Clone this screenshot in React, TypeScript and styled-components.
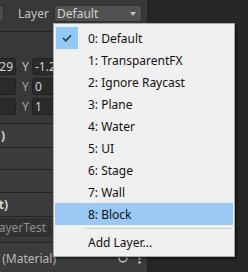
import React from "react";
import styled, { createGlobalStyle } from "styled-components";

const Global = createGlobalStyle`
  *, *::before, *::after { box-sizing: border-box; }
  html, body { margin: 0; padding: 0; background: #262626; }
  body { font-family: "Noto Sans", "Liberation Sans", sans-serif; }
`;

const Screen = styled.div`
  position: relative;
  width: 248px;
  height: 272px;
  overflow: hidden;
  display: flex;
  background: #262626;
`;

const Inspector = styled.div`
  width: 147px;
  flex: none;
  background: #383838;
  display: flex;
  flex-direction: column;
  color: #c4c4c4;
  font-size: 12px;
`;

const TopRow = styled.div`
  height: 32px;
  flex: none;
  border-bottom: 1px solid #242424;
  display: flex;
  align-items: flex-start;
  padding-top: 5px;
`;

const TagStub = styled.div`
  width: 4px;
  height: 17px;
  background: #4b4b4b;
  border: 1px solid #2e2e2e;
  border-left: none;
  border-radius: 0 3px 3px 0;
`;

const FieldLabel = styled.div`
  width: 36px;
  margin-left: 14px;
  height: 17px;
  line-height: 17px;
  color: #c4c4c4;
`;

const Dropdown = styled.div`
  width: 88px;
  height: 17px;
  background: #515151;
  border: 1px solid #2f2f2f;
  border-radius: 3px;
  display: flex;
  align-items: center;
  justify-content: space-between;
  padding: 0 5px 0 2px;
  color: #d2d2d2;
  line-height: 15px;
`;

const Arrow = styled.span`
  width: 0;
  height: 0;
  border-left: 3.5px solid transparent;
  border-right: 3.5px solid transparent;
  border-top: 4px solid #c4c4c4;
`;

const TransformBody = styled.div`
  height: 91px;
  flex: none;
  padding-top: 26px;
  display: flex;
  flex-direction: column;
  gap: 3px;
`;

const VecRow = styled.div`
  height: 17px;
  display: flex;
  align-items: center;
`;

const NumField = styled.div<{ $stub?: boolean }>`
  height: 17px;
  background: #2a2a2a;
  border: 1px solid #212121;
  border-radius: ${(p) => (p.$stub ? "0 3px 3px 0" : "3px")};
  ${(p) => (p.$stub ? "border-left: none; width: 16px; justify-content: flex-end; padding-right: 2px;" : "flex: 1; margin-right: 4px; padding-left: 2px;")}
  display: flex;
  align-items: center;
  overflow: hidden;
  white-space: nowrap;
  color: #d2d2d2;
  line-height: 15px;
`;

const AxisLabel = styled.div<{ $dim?: boolean }>`
  width: 16px;
  padding-left: 3px;
  text-align: center;
  color: ${(p) => (p.$dim ? "#a8a8a8" : "#c4c4c4")};
`;

const Header = styled.div<{ $h: number; $bold?: boolean }>`
  height: ${(p) => p.$h}px;
  flex: none;
  border-top: 1px solid #242424;
  background: #3c3c3c;
  display: flex;
  align-items: center;
  font-weight: ${(p) => (p.$bold ? 700 : 400)};
  color: ${(p) => (p.$bold ? "#d6d6d6" : "#b8b8b8")};
`;

const Clip = styled.div<{ $w: number }>`
  width: ${(p) => p.$w}px;
  flex: none;
  overflow: hidden;
  white-space: nowrap;
  display: flex;
  justify-content: flex-end;
  & > span { flex: none; }
`;

const FieldRowBox = styled.div`
  height: 26px;
  flex: none;
  border-top: 1px solid #242424;
  padding-top: 2px;
  display: flex;
  align-items: flex-start;
`;

const ReadOnlyField = styled.div`
  width: 51px;
  height: 17px;
  background: #323232;
  border: 1px solid #2a2a2a;
  border-left: none;
  border-radius: 0 3px 3px 0;
  overflow: hidden;
  white-space: nowrap;
  display: flex;
  justify-content: flex-end;
  align-items: center;
  padding-right: 4px;
  color: #8e8e8e;
  line-height: 15px;
  & > span { flex: none; }
`;

const HeaderIcons = styled.div`
  margin-left: auto;
  display: flex;
  align-items: center;
  gap: 10px;
  padding-right: 6px;
`;

const Menu = styled.div`
  position: absolute;
  left: 53px;
  top: 23px;
  width: 182px;
  height: 234px;
  background: #f0f0f0;
  border: 1px solid #a9a9a9;
  box-shadow: 2px 2px 2px rgba(0, 0, 0, 0.5);
  padding: 3px 1px;
  display: flex;
  flex-direction: column;
  color: #111;
  font-size: 12px;
`;

const MenuRow = styled.div<{ $hover?: boolean }>`
  height: 22px;
  flex: none;
  display: flex;
  align-items: center;
  padding-left: 1px;
  background: ${(p) => (p.$hover ? "#99c9f4" : "transparent")};
`;

const CheckSlot = styled.div<{ $on?: boolean }>`
  width: 22px;
  height: 22px;
  flex: none;
  display: flex;
  align-items: center;
  justify-content: center;
  background: ${(p) => (p.$on ? "#93c8f6" : "transparent")};
`;

const MenuText = styled.span`
  margin-left: 10px;
  white-space: nowrap;
`;

const Separator = styled.div`
  height: 6px;
  flex: none;
  padding: 3px 1px 0 29px;
  & > div { height: 1px; background: #d2d2d2; }
`;

const layers = [
  "0: Default",
  "1: TransparentFX",
  "2: Ignore Raycast",
  "3: Plane",
  "4: Water",
  "5: UI",
  "6: Stage",
  "7: Wall",
  "8: Block",
];

export default function App() {
  return (
    <>
      <Global />
      <Screen>
        <Inspector>
          <TopRow>
            <TagStub />
            <FieldLabel>Layer</FieldLabel>
            <Dropdown>
              <span>Default</span>
              <Arrow />
            </Dropdown>
          </TopRow>
          <TransformBody>
            <VecRow>
              <NumField $stub>0.29</NumField>
              <AxisLabel>Y</AxisLabel>
              <NumField>-1.2</NumField>
            </VecRow>
            <VecRow>
              <NumField $stub />
              <AxisLabel $dim>Y</AxisLabel>
              <NumField>0</NumField>
            </VecRow>
            <VecRow>
              <NumField $stub />
              <AxisLabel $dim>Y</AxisLabel>
              <NumField>1</NumField>
            </VecRow>
          </TransformBody>
          <Header $h={24} $bold>
            <Clip $w={5}>
              <span>)</span>
            </Clip>
          </Header>
          <Header $h={22} />
          <Header $h={23} />
          <Header $h={24} $bold>
            <Clip $w={8}>
              <span>t)</span>
            </Clip>
          </Header>
          <FieldRowBox>
            <ReadOnlyField>
              <span>LayerTest</span>
            </ReadOnlyField>
          </FieldRowBox>
          <Header $h={31}>
            <Clip $w={56}>
              <span>(Material)</span>
            </Clip>
            <HeaderIcons>
              <svg width="10" height="10" viewBox="0 0 10 10">
                <circle cx="5" cy="5" r="4" fill="none" stroke="#c4c4c4" strokeWidth="1.5" />
              </svg>
              <svg width="3" height="11" viewBox="0 0 3 11">
                <circle cx="1.5" cy="1.5" r="1.2" fill="#c4c4c4" />
                <circle cx="1.5" cy="5.5" r="1.2" fill="#c4c4c4" />
                <circle cx="1.5" cy="9.5" r="1.2" fill="#c4c4c4" />
              </svg>
            </HeaderIcons>
          </Header>
        </Inspector>
        <Menu>
          {layers.map((name, i) => (
            <MenuRow key={name} $hover={i === 8}>
              <CheckSlot $on={i === 0}>
                {i === 0 && (
                  <svg width="10" height="8" viewBox="0 0 10 8">
                    <path d="M1 4 L3.8 6.8 L9 1.2" fill="none" stroke="#2e3a44" strokeWidth="1.6" />
                  </svg>
                )}
              </CheckSlot>
              <MenuText>{name}</MenuText>
            </MenuRow>
          ))}
          <Separator>
            <div />
          </Separator>
          <MenuRow>
            <CheckSlot />
            <MenuText>Add Layer...</MenuText>
          </MenuRow>
        </Menu>
      </Screen>
    </>
  );
}
